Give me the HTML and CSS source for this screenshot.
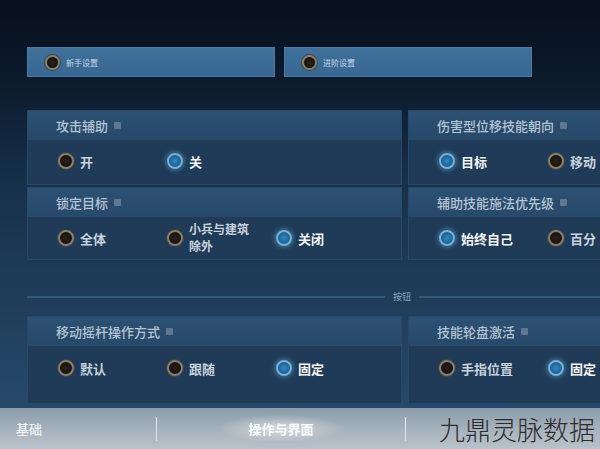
FILE: index.html
```html
<!DOCTYPE html>
<html>
<head>
<meta charset="utf-8">
<link rel="stylesheet" href="styles.css">
</head>
<body>
<div class="screen">

  <div class="modes">
    <div class="mode"><span class="dot off"></span>新手设置</div>
    <div class="mode"><span class="dot off"></span>进阶设置</div>
  </div>

  <div class="panels">
    <div class="panel">
      <div class="ptitle">攻击辅助<span class="help"></span></div>
      <div class="opts">
        <div class="opt"><span class="dot off"></span><span class="lbl">开</span></div>
        <div class="opt"><span class="dot on"></span><span class="lbl sel">关</span></div>
      </div>
    </div>
    <div class="panel">
      <div class="ptitle">伤害型位移技能朝向<span class="help"></span></div>
      <div class="opts">
        <div class="opt"><span class="dot on"></span><span class="lbl sel">目标</span></div>
        <div class="opt"><span class="dot off"></span><span class="lbl">移动</span></div>
      </div>
    </div>
    <div class="panel">
      <div class="ptitle">锁定目标<span class="help"></span></div>
      <div class="opts">
        <div class="opt"><span class="dot off"></span><span class="lbl">全体</span></div>
        <div class="opt"><span class="dot off"></span><span class="lbl two">小兵与建筑<br>除外</span></div>
        <div class="opt"><span class="dot on"></span><span class="lbl sel">关闭</span></div>
      </div>
    </div>
    <div class="panel">
      <div class="ptitle">辅助技能施法优先级<span class="help"></span></div>
      <div class="opts">
        <div class="opt"><span class="dot on"></span><span class="lbl sel">始终自己</span></div>
        <div class="opt"><span class="dot off"></span><span class="lbl">百分</span></div>
      </div>
    </div>
  </div>

  <div class="sep"><span>按钮</span></div>

  <div class="panels">
    <div class="panel tall">
      <div class="ptitle">移动摇杆操作方式<span class="help"></span></div>
      <div class="opts">
        <div class="opt"><span class="dot off"></span><span class="lbl">默认</span></div>
        <div class="opt"><span class="dot off"></span><span class="lbl">跟随</span></div>
        <div class="opt"><span class="dot on"></span><span class="lbl sel">固定</span></div>
      </div>
    </div>
    <div class="panel tall">
      <div class="ptitle">技能轮盘激活<span class="help"></span></div>
      <div class="opts">
        <div class="opt"><span class="dot off"></span><span class="lbl">手指位置</span></div>
        <div class="opt"><span class="dot on"></span><span class="lbl sel">固定</span></div>
      </div>
    </div>
  </div>

  <div class="tabbar">
    <div class="tab first">基础</div>
    <div class="bar"></div>
    <div class="tab cur">操作与界面</div>
    <div class="bar"></div>
    <div class="mark">九鼎灵脉数据</div>
  </div>

</div>
</body>
</html>
```

FILE: styles.css
```css
body { margin: 0; background: #0a1422; font-family: "Noto Sans CJK SC", "Noto Sans", sans-serif; }

.screen { width: 600px; height: 449px; overflow: hidden; display: flex; flex-direction: column;
  background: linear-gradient(180deg, #07101c 0px, #0c1a2b 80px, #16304a 180px, #1f3d5a 300px, #26496a 400px); }

.modes { display: flex; gap: 9px; margin: 47px 0 0 27px; }
.mode { width: 248px; height: 30px; box-sizing: border-box; display: flex; align-items: center;
  padding-left: 17px; gap: 6px; font-size: 8px; color: #c9d6e2;
  background: linear-gradient(180deg, #3f719b, #386892); border: 1px solid #4b7ca6; }
.mode .dot { width: 15px; height: 15px; }

.panels { display: grid; grid-template-columns: 375px 200px; column-gap: 6px; row-gap: 2px;
  margin-left: 27px; }
.modes + .panels { margin-top: 33px; }

.panel { height: 73px; display: flex; flex-direction: column; background: #1f3b57;
  border: 1px solid #28496a; box-sizing: border-box; }
.panel:nth-child(-n+2) { height: 75px; }
.panel.tall { height: 88px; }

.ptitle { height: 29px; flex: none; display: flex; align-items: center; padding-left: 28px;
  font-size: 13px; font-weight: 500; color: #b3c4d3; background: linear-gradient(180deg, #2c5173, #27496a); }
.help { width: 7px; height: 7px; margin-left: 6px; background: #5f7890; border-radius: 1px; }

.opts { display: flex; align-items: center; padding-left: 30px; height: 42px; }
.tall .opts { height: 44px; }
.opt { width: 109px; display: flex; align-items: center; gap: 6px; flex: none; }
.lbl { font-size: 13px; font-weight: bold; color: #c6d2dc; line-height: 17px; white-space: nowrap; }
.lbl.sel { color: #f2f6f9; }
.lbl.two { font-size: 12px; margin-top: -2px; }

.dot { width: 16px; height: 16px; border-radius: 50%; box-sizing: border-box; flex: none; }
.dot.off { background: radial-gradient(circle, #2a231c 0, #17130f 70%); border: 2px solid #8d7d63;
  box-shadow: 0 0 0 1px #3c4550; }
.dot.on { background: radial-gradient(circle, #2f8ac4 0, #1a5f92 70%); border: 2px solid #7ab3d3;
  box-shadow: 0 0 0 2px #2d5a7c, 0 0 4px 2px rgba(110, 170, 210, 0.4); }

.sep { display: flex; align-items: center; gap: 8px; margin: 27px 0 0 27px; height: 20px; }
.sep::before { content: ""; width: 358px; height: 2px; background: #34587a; }
.sep::after { content: ""; flex: 1; height: 2px; background: #34587a; }
.sep span { font-size: 9px; color: #8ea6bb; line-height: 20px; }

.sep + .panels { margin-top: 9px; }

.tabbar { margin-top: auto; height: 41px; display: flex; align-items: center;
  background: linear-gradient(180deg, #8c9caa, #a9b5bf 60%, #b8c2c9); }
.tab { font-size: 13px; color: #eef2f4; font-weight: 500; }
.tab.first { width: 140px; padding-left: 16px; }
.tab.cur { width: 248px; text-align: center; font-weight: bold; color: #fafcfd;
  background: radial-gradient(ellipse 90px 20px at 50% 50%, rgba(255, 252, 240, 0.55), rgba(255, 255, 255, 0) 70%);
  line-height: 41px; }
.bar { width: 1px; height: 24px; background: #dfe5ea; }
.mark { margin-left: 33px; font-size: 26px; color: #2c2c2c; font-weight: 300; white-space: nowrap; }
```
